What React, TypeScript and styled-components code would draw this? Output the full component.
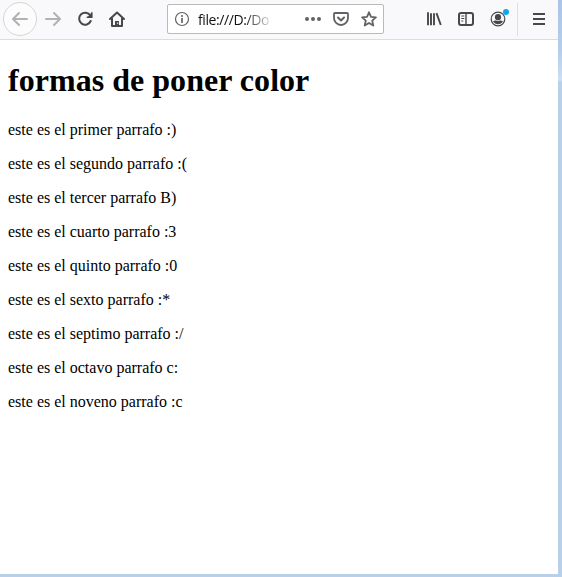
import React from "react";
import styled, { createGlobalStyle } from "styled-components";

const GlobalStyle = createGlobalStyle`
  * { box-sizing: border-box; }
  body { margin: 0; background: #fff; overflow: hidden; }
`;

const Window = styled.div`
  display: flex;
  flex-direction: column;
  height: 577px;
  width: 562px;
  padding: 0 4px 3px 0;
  background: linear-gradient(#aac5e8 0, #b4cdeb 50px, #cbdff5 80px, #b9d0eb 82px, #b9d0eb 100%);
`;

const Toolbar = styled.header`
  display: flex;
  align-items: center;
  flex: none;
  height: 40px;
  padding: 0 3px 1px;
  background: #f9f9fb;
  border-bottom: 1px solid #dcdcde;
`;

const ToolButton = styled.button<{ $muted?: boolean }>`
  display: flex;
  align-items: center;
  justify-content: center;
  flex: none;
  width: 32px;
  height: 32px;
  padding: 0;
  border: 0;
  background: none;
  color: ${(p) => (p.$muted ? "#b2b2b4" : "#48484b")};
`;

const BackButton = styled(ToolButton)`
  width: 34px;
  height: 34px;
  border: 1px solid #d6d6d8;
  border-radius: 50%;
  background: #fcfcfd;
`;

const AddressBar = styled.div`
  display: flex;
  align-items: center;
  flex: none;
  width: 217px;
  height: 30px;
  margin: 0 34px;
  padding: 0 6px 0 6px;
  border: 1px solid #bababc;
  border-radius: 2px;
  background: #fff;
  color: #626264;
`;

const Address = styled.span`
  flex: 1;
  margin-left: 8px;
  padding-top: 1px;
  overflow: hidden;
  white-space: nowrap;
  font: 14px/20px "Open Sans", "Noto Sans", sans-serif;
  letter-spacing: -0.4px;
  color: #111;
  mask-image: linear-gradient(to right, #000 46px, transparent 76px);
`;

const AddressActions = styled.div`
  display: flex;
  gap: 12px;
`;

const Divider = styled.div`
  width: 1px;
  height: 33px;
  margin: 0 5px 0 3px;
  background: #dededf;
`;

const AccountButton = styled(ToolButton)`
  position: relative;
`;

const Notice = styled.span`
  position: absolute;
  top: 6px;
  right: 5px;
  width: 6px;
  height: 6px;
  border-radius: 50%;
  background: #0da7ec;
`;

const Page = styled.main`
  flex: 1;
  padding: 0 8px;
  background: #fff;
  color: #000;
  font: 16px/18px "Liberation Serif", "Times New Roman", serif;
`;

const Heading = styled.h1`
  margin: 21px 0 22px;
  font-size: 32px;
  line-height: 38px;
  letter-spacing: 0.03px;
`;

const Paragraph = styled.p`
  margin: 0 0 16px;
`;

const Glyph = styled.svg`
  display: block;
  flex: none;
  width: 16px;
  height: 16px;
  fill: none;
  stroke: currentColor;
  stroke-width: 2;
  stroke-linecap: round;
  stroke-linejoin: round;
`;

const Icon = ({ children }: { children: React.ReactNode }) => (
  <Glyph viewBox="0 0 16 16" aria-hidden="true">{children}</Glyph>
);

const paragraphs = [
  "este es el primer parrafo :)",
  "este es el segundo parrafo :(",
  "este es el tercer parrafo B)",
  "este es el cuarto parrafo :3",
  "este es el quinto parrafo :0",
  "este es el sexto parrafo :*",
  "este es el septimo parrafo :/",
  "este es el octavo parrafo c:",
  "este es el noveno parrafo :c",
];

export default function App() {
  return (
    <>
      <GlobalStyle />
      <Window>
        <Toolbar>
          <BackButton $muted aria-label="Atrás">
            <Icon><path d="M15 8H1.500M7 2 1 8l6 6" /></Icon>
          </BackButton>
          <ToolButton $muted aria-label="Adelante">
            <Icon><path d="M1 8h13.500M9 2l6 6-6 6" /></Icon>
          </ToolButton>
          <ToolButton aria-label="Recargar">
            <Icon>
              <path d="M13.300 4.600A6 6 0 1 0 13.700 10" />
              <path d="M15.500 1V7H9.500z" fill="currentColor" stroke="none" />
              <path d="M14.500 2v4.200h-4.200" strokeWidth="1.400" />
            </Icon>
          </ToolButton>
          <ToolButton aria-label="Inicio">
            <Icon>
              <path d="M1 8l7-6.500L15 8M3 7.500V15h10V7.500" />
              <path d="M6 15v-5h4v5z" fill="currentColor" stroke="none" />
              <path d="M8.700 11.800v.8" stroke="#f9f9fb" strokeWidth="1" />
            </Icon>
          </ToolButton>
          <AddressBar>
            <Icon>
              <circle cx="8" cy="8" r="6.500" strokeWidth="1.200" />
              <path d="M8 7.500v3.700" strokeWidth="1.700" />
              <circle cx="8" cy="4.900" r="1" fill="currentColor" stroke="none" />
            </Icon>
            <Address>file:///D:/Do</Address>
            <AddressActions>
              <Icon>
                <g fill="currentColor" stroke="none">
                  <circle cx="2" cy="8" r="2" />
                  <circle cx="8" cy="8" r="2" />
                  <circle cx="14" cy="8" r="2" />
                </g>
              </Icon>
              <Icon>
                <path d="M2 2h12a1 1 0 0 1 1 1v4a7 7 0 0 1-14 0V3a1 1 0 0 1 1-1z" strokeWidth="1.800" />
                <path d="M5 6.500l3 3 3-3" />
              </Icon>
              <Icon>
                <path d="M8 1.300l2 4.500 4.900.5-3.700 3.300 1.100 4.900L8 12l-4.300 2.500 1.100-4.900-3.700-3.300L6 5.800z" strokeWidth="1.800" />
              </Icon>
            </AddressActions>
          </AddressBar>
          <ToolButton aria-label="Biblioteca">
            <Icon><path d="M2 1.200v13M5 2.200v12M8 2.200v12M10.500 2.200l4.300 11.800" strokeWidth="1.900" strokeLinecap="butt" /></Icon>
          </ToolButton>
          <ToolButton aria-label="Barra lateral">
            <Icon>
              <rect x="1" y="2" width="14" height="12" rx="2" />
              <path d="M8 2v12" strokeWidth="1.400" />
              <path d="M3.300 5h3M3.300 7.500h3M3.300 10h2" strokeWidth="1" strokeLinecap="butt" />
            </Icon>
          </ToolButton>
          <AccountButton aria-label="Cuenta">
            <Icon>
              <circle cx="8" cy="8" r="6.800" strokeWidth="1.200" />
              <g fill="currentColor" stroke="none">
                <circle cx="8" cy="6.200" r="3.100" />
                <path d="M3 10.300c1-.7 2.400-1 3-.9 1.300.7 2.700.7 4 0 .8-.1 2 .2 3 .9-1 1.900-3 2.900-5 2.900s-4-1-5-2.900z" />
              </g>
            </Icon>
            <Notice />
          </AccountButton>
          <Divider />
          <ToolButton aria-label="Menú">
            <Icon><path d="M2 3h12M2 8h12M2 13h12" strokeLinecap="butt" /></Icon>
          </ToolButton>
        </Toolbar>
        <Page>
          <Heading>formas de poner color</Heading>
          {paragraphs.map((text) => <Paragraph key={text}>{text}</Paragraph>)}
        </Page>
      </Window>
    </>
  );
}
